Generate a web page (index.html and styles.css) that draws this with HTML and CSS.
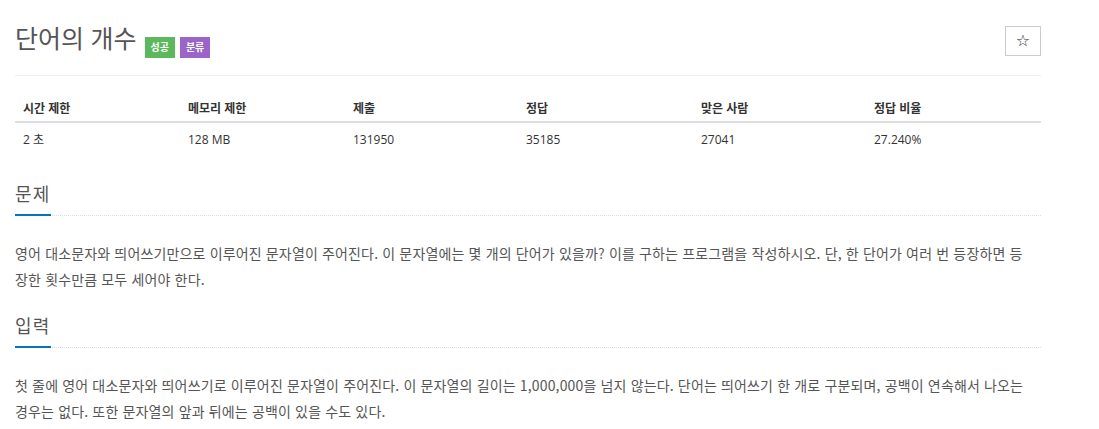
FILE: index.html
```html
<!DOCTYPE html>
<html lang="ko">
<head>
  <meta charset="utf8">
  <title>단어의 개수</title>
  <link rel="stylesheet" href="styles.css">
</head>
<body>

<div class="page">
  <div class="page-header">
    <h1 class="problem-title">
      <span class="title-text">단어의 개수</span>
      <span class="label label-success">성공</span>
      <span class="label label-tag">분류</span>
    </h1>
    <button class="star-btn" type="button">&#9734;</button>
  </div>

  <table class="problem-info">
    <thead>
      <tr>
        <th class="col-1">시간 제한</th>
        <th class="col-2">메모리 제한</th>
        <th class="col-3">제출</th>
        <th class="col-4">정답</th>
        <th class="col-5">맞은 사람</th>
        <th class="col-6">정답 비율</th>
      </tr>
    </thead>
    <tbody>
      <tr>
        <td>2 초</td>
        <td>128 MB</td>
        <td>131950</td>
        <td>35185</td>
        <td>27041</td>
        <td>27.240%</td>
      </tr>
    </tbody>
  </table>

  <section class="problem-section">
    <div class="headline"><h2>문제</h2></div>
    <p>영어 대소문자와 띄어쓰기만으로 이루어진 문자열이 주어진다. 이 문자열에는 몇 개의 단어가 있을까? 이를 구하는 프로그램을 작성하시오. 단, 한 단어가 여러 번 등장하면 등<br>장한 횟수만큼 모두 세어야 한다.</p>
  </section>

  <section class="problem-section">
    <div class="headline"><h2>입력</h2></div>
    <p>첫 줄에 영어 대소문자와 띄어쓰기로 이루어진 문자열이 주어진다. 이 문자열의 길이는 1,000,000을 넘지 않는다. 단어는 띄어쓰기 한 개로 구분되며, 공백이 연속해서 나오는<br>경우는 없다. 또한 문자열의 앞과 뒤에는 공백이 있을 수도 있다.</p>
  </section>
</div>

</body>
</html>
```

FILE: styles.css
```css
body { margin: 0; padding: 0; font-family: "Open Sans", "Noto Sans CJK KR", sans-serif; color: #333; background: #fff; }
.page { width: 1026px; padding: 0 15px; }

.page-header { display: flex; justify-content: space-between; align-items: flex-start; padding-top: 20px; padding-bottom: 17px; border-bottom: 1px solid #eee; }
.problem-title { display: flex; align-items: flex-start; gap: 5px; margin: 0; font-weight: normal; font-size: 25px; line-height: 36px; color: #555; }
.problem-title .title-text { margin-right: 3px; }
.label { margin-top: 17px; height: 21px; padding: 0 6px; line-height: 21px; font-size: 10px; font-weight: bold; color: #fff; }
.label-success { background: #5cb85c; }
.label-tag { background: #9b64c8; }
.star-btn { margin-top: 6px; width: 36px; height: 30px; padding: 0; border: 1px solid #ccc; background: #fff; color: #333; font-family: "DejaVu Sans", sans-serif; font-size: 16px; line-height: 28px; }

.problem-info { width: 1026px; margin-top: 20px; border-collapse: collapse; table-layout: fixed; font-size: 12px; }
.problem-info th, .problem-info td { text-align: left; padding: 0 8px; }
.problem-info th { height: 25px; line-height: 16px; border-bottom: 2px solid #ddd; font-weight: bold; vertical-align: middle; }
.problem-info td { height: 34px; line-height: 16px; color: #333; }
.col-1 { width: 149px; }
.col-2 { width: 149px; }
.col-3 { width: 157px; }
.col-4 { width: 159px; }
.col-5 { width: 157px; }
.col-6 { width: 159px; }

.problem-section { margin-top: 24px; }
.problem-section + .problem-section { margin-top: 21px; }
.headline { display: flex; border-bottom: 1px dotted #ddd; margin-bottom: 24px; }
.headline h2 { margin: 0 0 -1px; padding-bottom: 7px; border-bottom: 2px solid #0076c0; font-size: 18px; font-weight: normal; line-height: 26px; color: #555; letter-spacing: 1.3px; }
.problem-section p { margin: 0; font-family: "Noto Sans CJK KR", "Open Sans", sans-serif; font-size: 14px; line-height: 26px; color: #555; letter-spacing: 0.15px; }
```
